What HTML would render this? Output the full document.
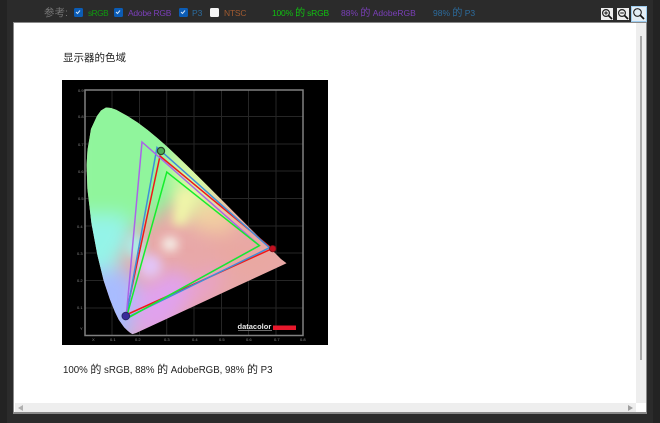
<!DOCTYPE html>
<html lang="zh">
<head>
<meta charset="utf-8">
<style>
html,body{margin:0;padding:0;width:660px;height:423px;overflow:hidden;background:#2b2b2b}
body{position:relative;font-family:"Liberation Sans","Noto Sans CJK SC",sans-serif;filter:blur(.3px)}
.a{position:absolute}
.t{position:absolute;top:7px;font-size:8.5px;line-height:13px;white-space:nowrap}
.t b{font-weight:normal;font-size:10px}
.c{position:absolute;top:8px;width:8.5px;height:8.5px;background:#0b5cb5;border-radius:1.5px}
.c svg{position:absolute;left:0;top:0}
.b{position:absolute;background:#eee;box-sizing:border-box}
.b svg{position:absolute;left:0;top:0}
p{position:absolute;margin:0;left:63px;font-size:10.5px;line-height:16px;color:#222;white-space:nowrap}
p b{font-weight:normal;font-size:11px}
</style>
</head>
<body>
<div class="a" style="left:0;top:0;width:7px;height:423px;background:#232323"></div>
<div class="a" style="left:653px;top:0;width:7px;height:423px;background:#232323"></div>
<div class="a" style="left:13px;top:22px;width:634px;height:392px;background:#8a8a8a"></div>
<div class="a" style="left:14px;top:23px;width:632px;height:389px;background:#fff"></div>
<div class="a" style="left:636px;top:23px;width:10px;height:380px;background:#eeeeee"></div>
<div class="a" style="left:640px;top:36px;width:1.5px;height:324px;background:#a8a8a8"></div>
<div class="a" style="left:15px;top:403px;width:621px;height:9px;background:#eeeeee"></div>
<div class="a" style="left:18px;top:405px;width:0;height:0;border-style:solid;border-width:3px 5px 3px 0;border-color:transparent #b0b0b0 transparent transparent"></div>
<div class="a" style="left:628px;top:405px;width:0;height:0;border-style:solid;border-width:3px 0 3px 5px;border-color:transparent transparent transparent #a0a0a0"></div>

<span class="t" style="left:44px;color:#777;font-size:10.5px">参考:</span>
<div class="c" style="left:74px"><svg width="8" height="8"><path d="M2 4l1.5 1.5L6 2.5" stroke="#cfe2f7" fill="none"/></svg></div>
<span class="t" style="left:88px;color:#109a10;font-size:8.3px;letter-spacing:-.5px">sRGB</span>
<div class="c" style="left:114px"><svg width="8" height="8"><path d="M2 4l1.5 1.5L6 2.5" stroke="#cfe2f7" fill="none"/></svg></div>
<span class="t" style="left:128px;color:#7a3fb8;letter-spacing:-.25px">Adobe RGB</span>
<div class="c" style="left:179px"><svg width="8" height="8"><path d="M2 4l1.5 1.5L6 2.5" stroke="#cfe2f7" fill="none"/></svg></div>
<span class="t" style="left:192px;color:#2c6c9e">P3</span>
<div class="c" style="left:210px;background:#f4f4f4"></div>
<span class="t" style="left:224px;color:#a05a30;letter-spacing:-.2px">NTSC</span>
<span class="t" style="left:272px;color:#10c010;letter-spacing:-.2px">100% <b>的</b> sRGB</span>
<span class="t" style="left:341px;color:#7a3fb8">88% <b>的</b> AdobeRGB</span>
<span class="t" style="left:433px;color:#2c6c9e">98% <b>的</b> P3</span>

<div class="b" style="left:601px;top:8px;width:12px;height:12px"><svg width="12" height="12"><circle cx="5" cy="5" r="3.4" fill="none" stroke="#222" stroke-width="1.2"/><path d="M7.5 7.5L11 11" stroke="#111" stroke-width="1.7"/><path d="M3.2 5h3.6M5 3.2v3.6" stroke="#111"/></svg></div>
<div class="b" style="left:617px;top:8px;width:12px;height:12px"><svg width="12" height="12"><circle cx="5" cy="5" r="3.4" fill="none" stroke="#222" stroke-width="1.2"/><path d="M7.5 7.5L11 11" stroke="#111" stroke-width="1.7"/><path d="M3.2 5h3.6" stroke="#111"/></svg></div>
<div class="b" style="left:631px;top:6px;width:16px;height:16px;border:1.5px solid #9ccbee;background:#e4eef6"><svg width="13" height="13"><circle cx="5.5" cy="5.5" r="3.8" fill="none" stroke="#222" stroke-width="1.1"/><path d="M8.2 8.2L12 12" stroke="#111" stroke-width="1.7"/></svg></div>

<p style="top:50px">显示器的色域</p>
<p style="top:362px;font-size:9.7px;letter-spacing:-.02px">100% <b>的</b> sRGB, 88% <b>的</b> AdobeRGB, 98% <b>的</b> P3</p>

<svg class="a" style="left:62px;top:80px" width="266" height="265" viewBox="62 80 266 265">
<defs>
<clipPath id="loc"><path d="M132.4 334.1L129.8 332.5 127.7 330.7 124.2 327.4 118.8 319.7 114.9 311.8 109.9 299.3 103.7 280.8 97.4 255.1 91.4 223 87.4 188.8 86.6 165 87.5 150 91 129 97 116 101 110.5 106 107.5 111 108 116.1 109.8 127.2 115.9 137.6 122.5 147.6 130 157.4 138.1 167.2 146.8 176.9 155.9 186.7 165.3 196.4 174.8 206 184.3 215.5 193.7 224.7 202.9 233.5 211.7 241.7 219.9 249.3 227.5 255.9 234 266.4 244.5 273.4 251.5 280.9 259 286.5 263.2 136 333Z"/></clipPath>
<filter id="bl" x="-50%" y="-50%" width="200%" height="200%"><feGaussianBlur stdDeviation="9"/></filter>
<filter id="bs" x="-50%" y="-50%" width="200%" height="200%"><feGaussianBlur stdDeviation="5"/></filter>
</defs>
<rect x="62" y="80" width="266" height="265" fill="#000"/>
<g stroke="#262626" stroke-width="1">
<path d="M112 90V335M139.5 90V335M166.7 90V335M194 90V335M221.5 90V335M248.5 90V335M276 90V335"/>
<path d="M85 116.5H303M85 144H303M85 171H303M85 198.5H303M85 226H303M85 253H303M85 280.5H303M85 308H303"/>
</g>
<rect x="85" y="90" width="218" height="245.5" fill="none" stroke="#808080" stroke-width="1.5"/>
<g clip-path="url(#loc)">
<rect x="80" y="100" width="215" height="240" fill="#e8a8a8"/>
<g filter="url(#bl)">
<path d="M70 90H185L190 180 160 215 125 235 70 230Z" fill="#90f59c"/>
<path d="M70 215H125L132 240 110 275 70 280Z" fill="#94f4e8"/>
<path d="M85 270H130L138 290 130 345 100 345Z" fill="#a8bcff"/>
<path d="M170 150H205L225 205 195 225 178 205Z" fill="#d6f7a4"/>
<path d="M195 195L240 215 225 235 195 228Z" fill="#f2cfa0"/>
<path d="M135 290L175 268 195 285 175 325 140 345Z" fill="#e0a2ee"/>
<path d="M195 275L225 265 215 295 180 315Z" fill="#e8a2c8"/>
<path d="M215 230L295 255 260 280 215 265Z" fill="#e9a8a2"/>
</g>
<g filter="url(#bs)">
<path d="M178 190L198 190 186 225 172 225Z" fill="#f0f5a8"/>
<ellipse cx="150" cy="266" rx="12" ry="12" fill="#e2c4f6"/>
<ellipse cx="135" cy="246" rx="9" ry="12" fill="#a8f0e8"/>
</g>
<ellipse cx="170" cy="244" rx="8" ry="7" fill="#f6f6ee" filter="url(#bs)"/>
</g>
<g fill="none" stroke-linejoin="miter">
<path d="M272 248.7L160 156 126 315Z" stroke="#f01818" stroke-width="1.5"/>
<path d="M269.5 247.7L157 147.5 126 318Z" stroke="#3f8fd8" stroke-width="1.5"/>
<path d="M259.4 245.6L142 142 126 319Z" stroke="#a964e8" stroke-width="1.5"/>
<path d="M259.4 245.6L166.8 172 126 319Z" stroke="#14ee2c" stroke-width="1.5"/>
</g>
<circle cx="161" cy="151" r="3.6" fill="#4cb054" stroke="#2c4a30" stroke-width="1.2"/>
<circle cx="125.8" cy="316" r="3.8" fill="#3a2a9a" stroke="#26266a" stroke-width="1"/>
<circle cx="272.7" cy="248.7" r="3.2" fill="#c01020" stroke="#801018" stroke-width="0.8"/>
<g font-family="Liberation Sans" font-size="4" fill="#8a8a8a">
<text x="78" y="92">0.9</text><text x="78" y="118">0.8</text><text x="78" y="146">0.7</text><text x="78" y="173">0.6</text><text x="78" y="200">0.5</text><text x="77" y="228">0.4</text><text x="77" y="255">0.3</text><text x="77" y="282">0.2</text><text x="77" y="309">0.1</text><text x="80" y="330">Y</text>
<text x="92" y="341">X</text><text x="110" y="341">0.1</text><text x="135" y="341">0.2</text><text x="164" y="341">0.3</text><text x="192" y="341">0.4</text><text x="219" y="341">0.5</text><text x="246" y="341">0.6</text><text x="274" y="341">0.7</text><text x="300" y="341">0.8</text>
</g>
<text x="237.5" y="329" font-family="Liberation Sans" font-size="7.5" font-weight="bold" fill="#e8e8e8">datacolor</text>
<rect x="238" y="330" width="34" height="0.8" fill="#888"/>
<rect x="273" y="325.5" width="23" height="4.5" fill="#e8182c"/>
</svg>
</body>
</html>
